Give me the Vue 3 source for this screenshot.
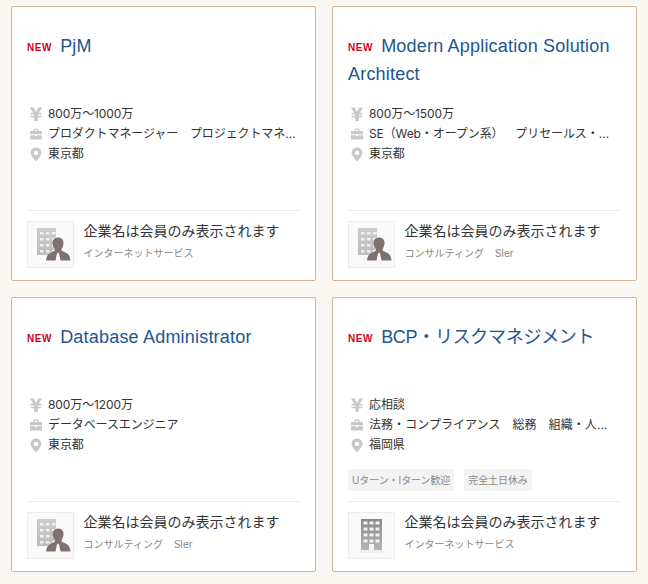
<script setup>
const jobs = [
  { title: 'PjM', salary: '800万〜1000万', role: 'プロダクトマネージャー　プロジェクトマネージャー', place: '東京都', tags: [], sub: ['インターネットサービス'], person: true },
  { title: 'Modern Application Solution Architect', salary: '800万〜1500万', role: 'SE（Web・オープン系）　プリセールス・コンサルタント', place: '東京都', tags: [], sub: ['コンサルティング', 'SIer'], person: true },
  { title: 'Database Administrator', salary: '800万〜1200万', role: 'データベースエンジニア', place: '東京都', tags: [], sub: ['コンサルティング', 'SIer'], person: true },
  { title: 'BCP・リスクマネジメント', ja: true, salary: '応相談', role: '法務・コンプライアンス　総務　組織・人事・労務', place: '福岡県', tags: ['Uターン・Iターン歓迎', '完全土日休み'], sub: ['インターネットサービス'], person: false }
]
const cells = []
for (const y of [6, 12, 18, 24]) for (const x of [6, 12, 18]) cells.push({ x, y })
</script>

<template>
  <main class="page">
    <article v-for="job in jobs" :key="job.title" class="card">
      <h2 class="title" :class="{ ja: job.ja }"><span class="new">NEW</span>{{ job.title }}</h2>
      <ul class="meta">
        <li>
          <svg class="icon" viewBox="0 0 14 14"><path d="M1 0.500H4.600L7 5 9.400 0.500H13L9.800 5.800H12.400V7.400H8.800V8.700H12.400V10.300H8.800V14H5.200V10.300H1.600V8.700H5.200V7.400H1.600V5.800H4.200Z" /></svg>
          <span class="line">{{ job.salary }}</span>
        </li>
        <li>
          <svg class="icon" viewBox="0 0 14 14"><path d="M4.500 4V2.600C4.500 2 5 1.600 5.600 1.600H8.400C9 1.600 9.500 2 9.500 2.600V4H13V7.300H1V4ZM5.700 4H8.300V2.800H5.700ZM1 8.200H6V9.300H8V8.200H13V12.500H1Z" /></svg>
          <span class="line" :class="{ tight: job.ja }">{{ job.role }}</span>
        </li>
        <li>
          <svg class="icon" viewBox="0 0 14 14"><path fill-rule="evenodd" d="M7 0.500C3.900 0.500 1.600 2.800 1.600 5.700 1.600 8.800 5 12 7 14.500 9 12 12.400 8.800 12.400 5.700 12.400 2.800 10.100 0.500 7 0.500ZM7 3.700A2.200 2.200 0 1 1 7 8.100 2.200 2.200 0 1 1 7 3.700Z" /></svg>
          <span class="line">{{ job.place }}</span>
        </li>
      </ul>
      <div v-if="job.tags.length" class="tags">
        <span v-for="tag in job.tags" :key="tag" class="tag">{{ tag }}</span>
      </div>
      <footer class="company">
        <div class="logo">
          <svg viewBox="0 0 45 45" width="45" height="45">
            <defs>
              <linearGradient id="bldg" x1="0" y1="0" x2="0" y2="1">
                <stop offset="0" stop-color="#8a8a8a" />
                <stop offset="1" stop-color="#b4b4b4" />
              </linearGradient>
              <linearGradient id="bldgLight" x1="0" y1="0" x2="0" y2="1">
                <stop offset="0" stop-color="#cdcdcd" />
                <stop offset="1" stop-color="#bcbcbc" />
              </linearGradient>
            </defs>
            <template v-if="job.person">
              <rect x="9" y="6" width="19" height="27" fill="url(#bldgLight)" />
              <rect v-for="c in cells" :key="c.x + '-' + c.y" :x="c.x + 6" :y="c.y + 4" width="3.500" height="2.500" fill="#f0f0f0" />
              <path d="M30.500 15.500C34 15.500 36 18.500 35.500 22 35.200 24.500 34 26 33.500 27.500V28.500L38.500 31C41 32.200 42 35 42.500 38.500H32.500L31 31.500 30 30.500 29 31.500 27.500 38.500H18C18.500 35 19.500 32.200 22 31L27 28.500V27.500C26 26 24.800 24.500 24.500 22 24 18.500 26 15.500 30.500 15.500Z" fill="#7d7270" stroke="#fff" stroke-width="0.800" paint-order="stroke" />
            </template>
            <template v-else>
              <rect x="11" y="37" width="23" height="3" fill="#efefef" />
              <rect x="12" y="6" width="21" height="31" fill="url(#bldg)" />
              <rect v-for="c in cells" :key="c.x + '-' + c.y" :x="c.x + 8.500" :y="c.y + 2.500" width="4" height="3" fill="#f2f2f2" />
              <rect x="20" y="31" width="5" height="6" fill="#f6f6f6" />
            </template>
          </svg>
        </div>
        <div class="info">
          <p class="name">企業名は会員のみ表示されます</p>
          <p class="sub"><span v-for="s in job.sub" :key="s">{{ s }}</span></p>
        </div>
      </footer>
    </article>
  </main>
</template>

<style>
html, body { background: #fbf7f2; }
</style>

<style scoped>
.page {
  width: 648px;
  height: 584px;
  box-sizing: border-box;
  padding: 6px 11px 0;
  display: grid;
  grid-template-columns: 305px 305px;
  grid-auto-rows: 275px;
  column-gap: 16px;
  row-gap: 16px;
  font-family: "Inter", "Noto Sans CJK JP", sans-serif;
  color: #333;
  text-spacing-trim: space-all;
}
.card {
  box-sizing: border-box;
  background: #fff;
  border: 1px solid #d2b79e;
  border-radius: 2px;
  padding: 25px 15px 12px;
  display: flex;
  flex-direction: column;
}
.title {
  margin: 0;
  height: 72px;
  font-family: "Liberation Sans", "Noto Sans CJK JP", sans-serif;
  font-size: 18px;
  font-weight: 400;
  line-height: 28px;
  letter-spacing: 0.2px;
  color: #20578f;
}
.title.ja { letter-spacing: -0.3px; }
.new {
  display: inline-block;
  margin-right: 8px;
  font-family: "Liberation Sans", sans-serif;
  font-size: 10px;
  line-height: 10px;
  font-weight: 700;
  letter-spacing: 0.6px;
  color: #d0021b;
  vertical-align: 1px;
}
.meta {
  list-style: none;
  margin: 0;
  padding: 0 0 0 2px;
}
.meta li {
  height: 20px;
  display: flex;
  align-items: center;
  font-size: 12px;
  line-height: 20px;
}
.icon {
  flex: none;
  width: 14px;
  height: 14px;
  margin-right: 5px;
  fill: #c8c8c8;
}
.line {
  overflow: hidden;
  white-space: nowrap;
  text-overflow: ellipsis;
  width: 249px;
  letter-spacing: -0.1px;
}
.line.tight {
  width: 246px;
  letter-spacing: 0.05px;
}
.tags {
  display: flex;
  gap: 10px;
  margin-top: 14px;
}
.tag {
  height: 22px;
  padding: 0 4px;
  background: #f3f3f3;
  color: #8a8a8a;
  font-size: 10px;
  line-height: 22px;
  letter-spacing: -0.08px;
}
.company {
  margin-top: auto;
  border-top: 1px solid #ececec;
  padding-top: 10px;
  display: flex;
  gap: 9.5px;
}
.logo {
  flex: none;
  width: 45px;
  height: 45px;
  border: 1px solid #ececec;
  background: #fafafa;
}
.logo svg { display: block; }
.info { min-width: 0; }
.name {
  margin: 0;
  font-size: 14px;
  line-height: 20px;
  color: #333;
}
.sub {
  margin: 4px 0 0;
  font-size: 10px;
  line-height: 16px;
  color: #888;
  display: flex;
  gap: 11px;
}
</style>
